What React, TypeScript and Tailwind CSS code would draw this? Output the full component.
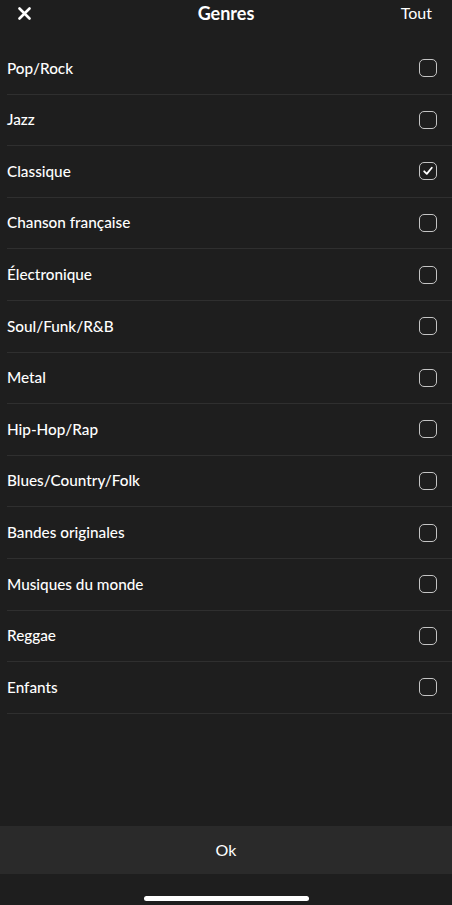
import React, { useState } from 'react';

const GENRES = [
  'Pop/Rock',
  'Jazz',
  'Classique',
  'Chanson française',
  'Électronique',
  'Soul/Funk/R&B',
  'Metal',
  'Hip-Hop/Rap',
  'Blues/Country/Folk',
  'Bandes originales',
  'Musiques du monde',
  'Reggae',
  'Enfants',
];

export default function App() {
  const [checked, setChecked] = useState<string[]>(['Classique']);

  const toggle = (g: string) =>
    setChecked((c) => (c.includes(g) ? c.filter((x) => x !== g) : [...c, g]));

  return (
    <main className="w-[452px] h-[905px] bg-[#1e1e1e] text-white flex flex-col font-['Lato',sans-serif] overflow-hidden">
      {/* Header */}
      <div className="h-[43px] grid grid-cols-[1fr_auto_1fr] items-start pt-[1px] px-[17px]">
        <button className="w-[14px] h-[24px] flex items-center justify-center">
          <svg width="13" height="13" viewBox="0 0 13 13">
            <path d="M1.5 1.5 L11.5 11.5 M11.5 1.5 L1.5 11.5" stroke="#fff" strokeWidth="2.6" strokeLinecap="round" />
          </svg>
        </button>
        <h1 className="text-center text-[18px] font-bold leading-[24px]">Genres</h1>
        <button className="justify-self-end text-[16px] leading-[24px] mr-[3px]">Tout</button>
      </div>

      {/* List */}
      <div className="flex flex-col pl-[7px]">
        {GENRES.map((g) => (
          <button
            key={g}
            onClick={() => toggle(g)}
            className="h-[51.6px] flex items-center justify-between border-b border-[#2f2f2f] pr-[15px] text-left"
          >
            <span className="text-[15.3px] font-medium leading-none">{g}</span>
            <Checkbox on={checked.includes(g)} />
          </button>
        ))}
      </div>

      <div className="flex-1" />

      {/* Ok bar */}
      <button className="h-[48px] bg-[#2a2a2a] text-[16px] flex items-center justify-center">Ok</button>

      {/* Home indicator */}
      <div className="h-[31px] flex items-end justify-center pb-[4px]">
        <div className="w-[165px] h-[5px] rounded-full bg-white" />
      </div>
    </main>
  );
}

function Checkbox({ on }: { on: boolean }) {
  return (
    <div className="w-[18px] h-[18px] rounded-[5px] border-[1.6px] border-[#c4c4c4] flex items-center justify-center">
      {on && (
        <svg width="12" height="12" viewBox="0 0 12 12">
          <path d="M2.2 6.3 L4.8 8.9 L9.8 2.8" fill="none" stroke="#fff" strokeWidth="1.8" strokeLinecap="round" strokeLinejoin="round" />
        </svg>
      )}
    </div>
  );
}
